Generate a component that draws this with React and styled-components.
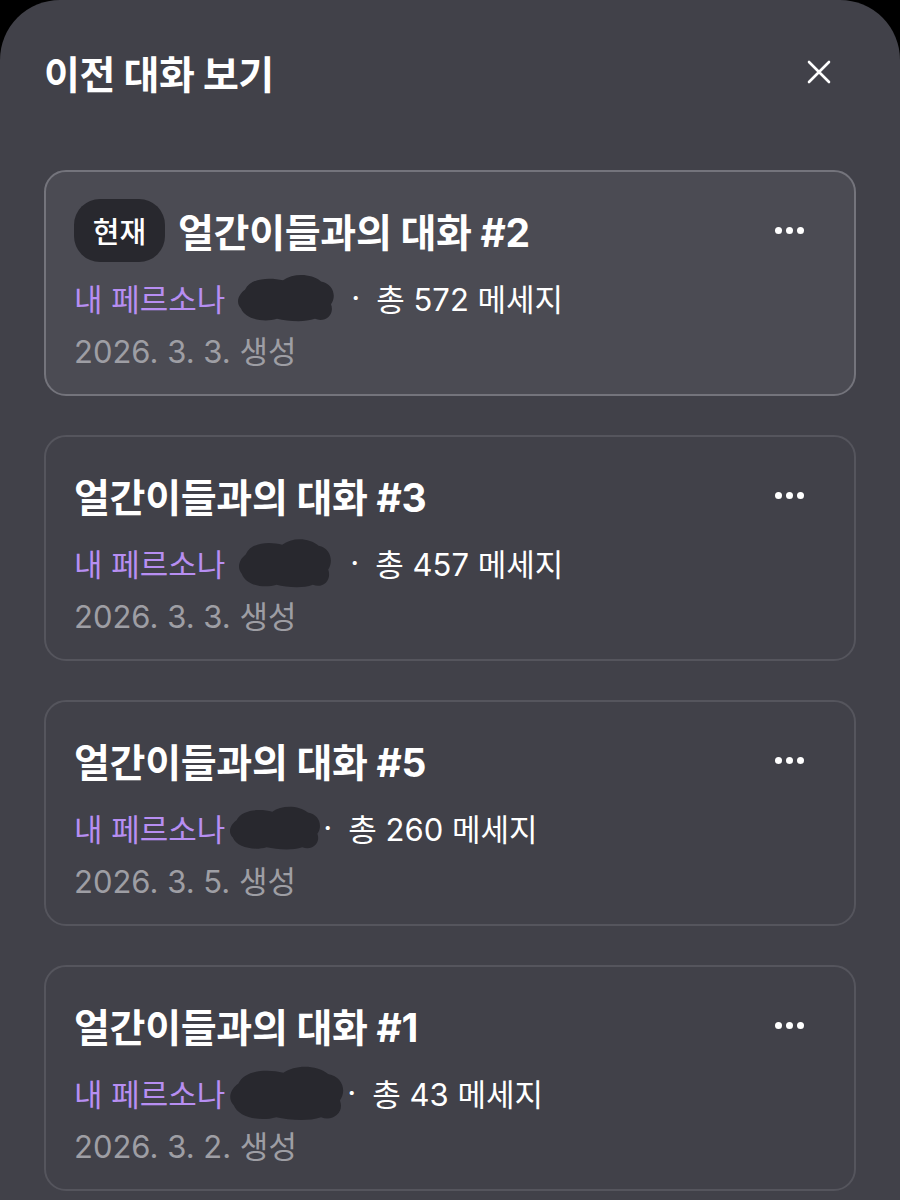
import React from "react";
import styled, { createGlobalStyle } from "styled-components";

const Global = createGlobalStyle`
  html, body {
    margin: 0;
    padding: 0;
    background: #000;
  }
  body {
    font-family: Inter, "Noto Sans CJK KR", sans-serif;
  }
`;

const Sheet = styled.section`
  width: 900px;
  min-height: 1200px;
  box-sizing: border-box;
  background: #414149;
  border-radius: 60px 60px 0 0;
  padding: 42px 44px 0 44px;
  overflow: hidden;
`;

const Header = styled.header`
  display: flex;
  align-items: center;
  justify-content: space-between;
  height: 60px;
  margin-bottom: 68px;
`;

const Heading = styled.h1`
  margin: 0;
  color: #fff;
  font-size: 39px;
  font-weight: 700;
  letter-spacing: -0.5px;
`;

const CloseBtn = styled.button`
  border: 0;
  background: none;
  padding: 0;
  margin-right: 22px;
  width: 30px;
  height: 30px;
  display: flex;
  align-items: center;
  justify-content: center;
  cursor: pointer;
`;

const List = styled.div`
  display: flex;
  flex-direction: column;
  gap: 39px;
`;

const Card = styled.div`
  position: relative;
  box-sizing: border-box;
  height: 226px;
  padding: 33px 28px 0 28px;
  border-radius: 22px;
  border: 2px solid ${(p) => (p.$active ? "#74747c" : "#55555d")};
  background: ${(p) => (p.$active ? "#4b4b53" : "#414149")};
`;

const TitleRow = styled.div`
  display: flex;
  align-items: center;
  height: 50px;
  gap: 13px;
`;

const Badge = styled.span`
  display: inline-flex;
  align-items: center;
  justify-content: center;
  height: 63px;
  width: 91px;
  border-radius: 26px;
  background: #28282e;
  color: #fff;
  font-size: 29px;
  font-weight: 500;
`;

const Title = styled.span`
  color: #fff;
  font-size: 39px;
  font-weight: 700;
  letter-spacing: -0.3px;
`;

const More = styled.div`
  position: absolute;
  top: 55px;
  right: 50px;
  display: flex;
  gap: 4px;
`;

const Dot = styled.span`
  width: 7px;
  height: 7px;
  border-radius: 50%;
  background: #fff;
`;

const Meta = styled.div`
  display: flex;
  align-items: center;
  height: 40px;
  margin-top: 22px;
  font-size: 31px;
  color: #fff;
`;

const Persona = styled.span`
  color: #b78ef2;
`;

const Blob = styled.svg`
  margin: -14px ${(p) => p.$gap}px -14px ${(p) => p.$left}px;
  flex: none;
`;

const Sep = styled.span`
  margin-right: 16px;
`;

const DateLine = styled.div`
  height: 40px;
  margin-top: 12px;
  display: flex;
  align-items: center;
  font-size: 31px;
  color: #9e9ea4;
`;

const CloseIcon = () => (
  <svg width="26" height="26" viewBox="0 0 26 26">
    <path d="M3 3 L23 23 M23 3 L3 23" stroke="#fff" strokeWidth="2.6" strokeLinecap="round" />
  </svg>
);

const Scribble = ({ w, h, left, gap }) => (
  <Blob width={w} height={h} viewBox="0 0 100 50" preserveAspectRatio="none" $left={left} $gap={gap}>
    <path
      d="M8 18 C14 6 34 6 46 9 C56 2 74 2 84 10 C96 12 100 24 94 32 C98 42 88 50 78 46 C66 50 50 48 40 46 C26 50 8 46 4 36 C-2 30 2 22 8 18 Z"
      fill="#28282e"
    />
  </Blob>
);

const chats = [
  { id: 2, count: 572, date: "2026. 3. 3.", active: true, blob: { w: 100, h: 52, left: 12, gap: 14 } },
  { id: 3, count: 457, date: "2026. 3. 3.", blob: { w: 96, h: 54, left: 13, gap: 16 } },
  { id: 5, count: 260, date: "2026. 3. 5.", blob: { w: 94, h: 48, left: 4, gap: 0 } },
  { id: 1, count: 43, date: "2026. 3. 2.", blob: { w: 118, h: 60, left: 4, gap: 0 } },
];

const ChatCard = ({ chat }) => (
  <Card $active={chat.active}>
    <TitleRow>
      {chat.active && <Badge>현재</Badge>}
      <Title>얼간이들과의 대화 #{chat.id}</Title>
    </TitleRow>
    <More>
      <Dot />
      <Dot />
      <Dot />
    </More>
    <Meta>
      <Persona>내 페르소나</Persona>
      <Scribble {...chat.blob} />
      <Sep>·</Sep>
      <span>총 {chat.count} 메세지</span>
    </Meta>
    <DateLine>{chat.date} 생성</DateLine>
  </Card>
);

export default function App() {
  return (
    <>
      <Global />
      <Sheet>
        <Header>
          <Heading>이전 대화 보기</Heading>
          <CloseBtn aria-label="닫기">
            <CloseIcon />
          </CloseBtn>
        </Header>
        <List>
          {chats.map((c) => (
            <ChatCard key={c.id} chat={c} />
          ))}
        </List>
      </Sheet>
    </>
  );
}
